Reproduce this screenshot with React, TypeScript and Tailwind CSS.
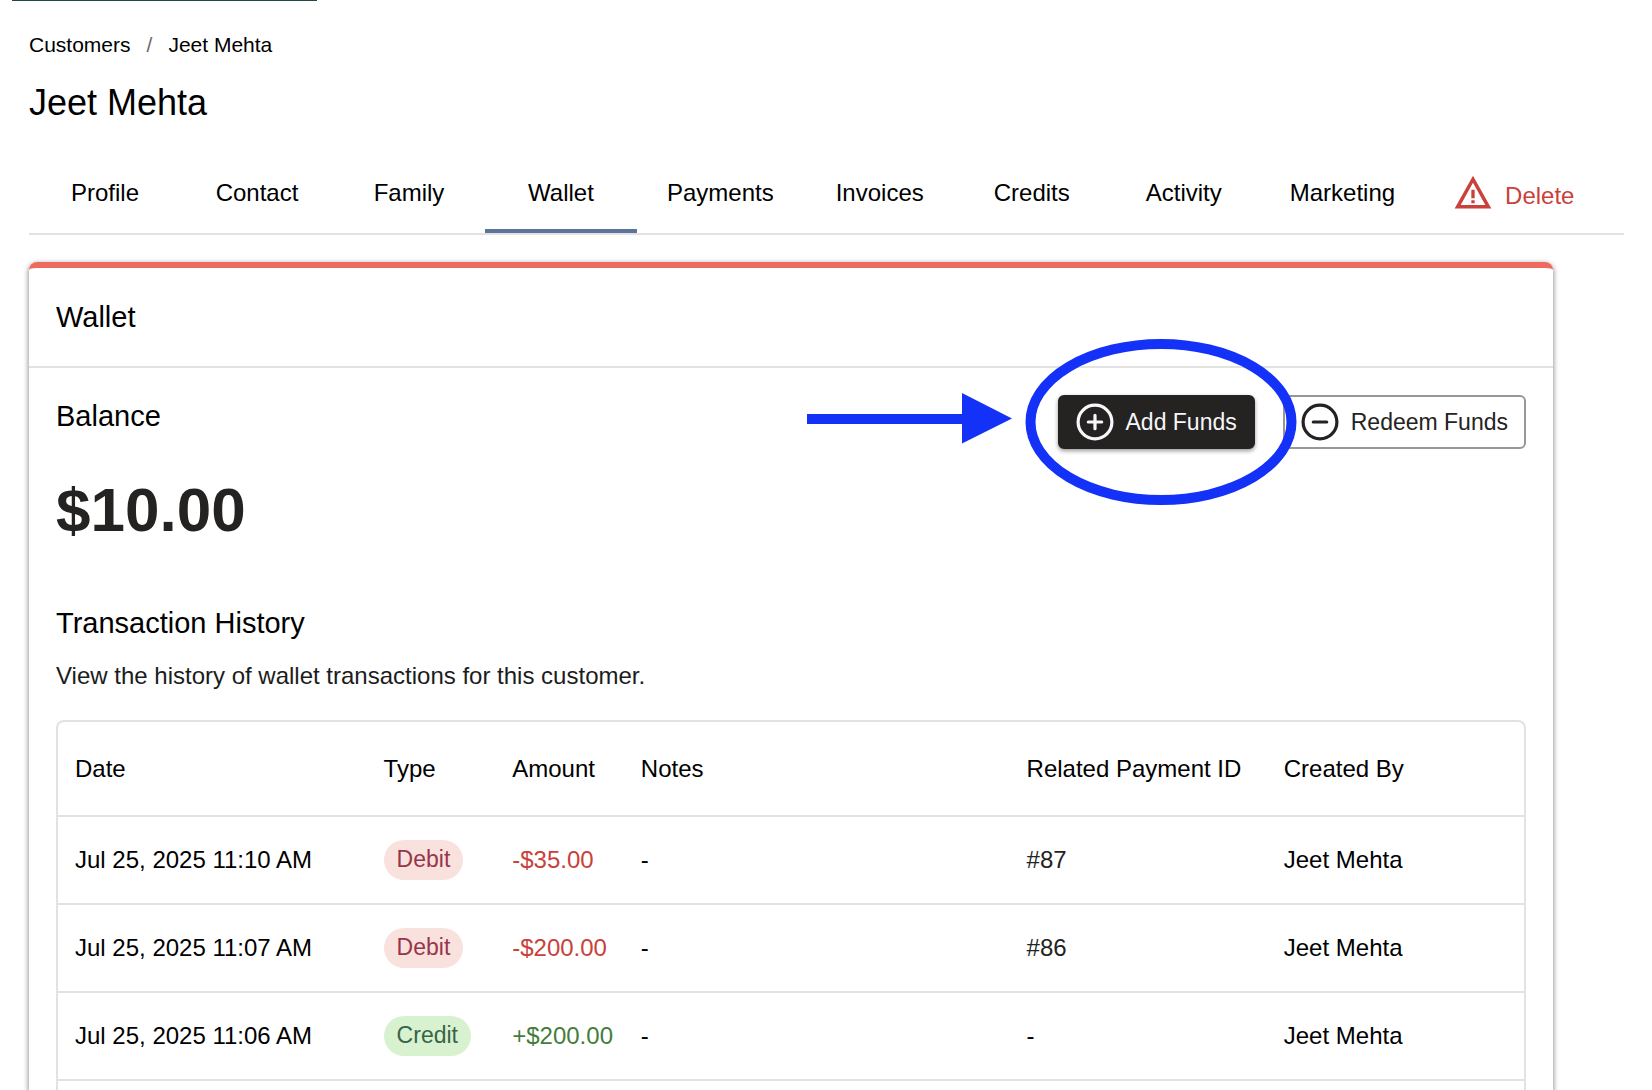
import clsx from 'clsx'
import { useState } from 'react'
import type { ReactNode } from 'react'

type Transaction = {
  date: string
  type: 'Debit' | 'Credit'
  amount: string
  notes: string
  paymentId: string | null
  createdBy: string
}

const TABS = ['Profile', 'Contact', 'Family', 'Wallet', 'Payments', 'Invoices', 'Credits', 'Activity', 'Marketing']

// Relative widths, the fixed table layout scales them up to the full row
const COLUMNS = [
  { label: 'Date', width: 'w-[12%]' },
  { label: 'Type', width: 'w-[5%]' },
  { label: 'Amount', width: 'w-[5%]' },
  { label: 'Notes', width: 'w-[15%]' },
  { label: 'Related Payment ID', width: 'w-[10%]' },
  { label: 'Created By', width: 'w-[10%]' },
]

const TRANSACTIONS: Transaction[] = [
  { date: 'Jul 25, 2025 11:10 AM', type: 'Debit', amount: '-$35.00', notes: '-', paymentId: '#87', createdBy: 'Jeet Mehta' },
  { date: 'Jul 25, 2025 11:07 AM', type: 'Debit', amount: '-$200.00', notes: '-', paymentId: '#86', createdBy: 'Jeet Mehta' },
  { date: 'Jul 25, 2025 11:06 AM', type: 'Credit', amount: '+$200.00', notes: '-', paymentId: null, createdBy: 'Jeet Mehta' },
]

export default function App() {
  const [tab, setTab] = useState('Wallet')

  return (
    <div className="flex h-screen flex-col overflow-hidden bg-white font-['Liberation_Sans',Arial,sans-serif] text-black">
      <div className="ml-3 h-px w-[305px] shrink-0 bg-[#24474b]" />
      <div className="flex flex-1 flex-col pl-[29px] pr-7 pt-7">
        <nav aria-label="Breadcrumb" className="flex gap-4 text-[21px] leading-8">
          <a href="#customers">Customers</a>
          <span className="text-[#6b6b6b]">/</span>
          <a href="#customer">Jeet Mehta</a>
        </nav>
        <h1 className="mt-[18px] text-4xl leading-[48px]">Jeet Mehta</h1>
        <CustomerTabs active={tab} onSelect={setTab} />
        <WalletCard />
      </div>
    </div>
  )
}

function CustomerTabs({ active, onSelect }: { active: string; onSelect: (tab: string) => void }) {
  return (
    <div className="mt-[26px] flex border-b-2 border-[#e2e2e2] text-2xl">
      <div role="tablist" className="flex">
        {TABS.map((name) => (
          <button
            key={name}
            type="button"
            role="tab"
            aria-selected={name === active}
            onClick={() => onSelect(name)}
            className={clsx(
              'h-20 min-w-[152px] border-y-4 border-t-transparent px-[30px]',
              name === active ? 'border-b-[#5b739d]' : 'border-b-transparent',
            )}
          >
            {name}
          </button>
        ))}
      </div>
      <button type="button" className="ml-7 flex h-20 items-center gap-3 text-[#c9413a]">
        <WarningIcon />
        <span className="pt-1.5">Delete</span>
      </button>
    </div>
  )
}

function WalletCard() {
  return (
    <section className="mr-[71px] mt-[27px] flex flex-1 flex-col rounded-t-lg border-t-[6px] border-[#ec6a5e] shadow-[0_2px_5px_1px_rgba(0,0,0,0.4)]">
      <header className="border-b-2 border-[#e2e2e2] px-[27px] py-7">
        <h2 className="text-[29px] leading-[42px]">Wallet</h2>
      </header>
      <div className="flex flex-1 flex-col px-[27px] pt-[27px]">
        <div className="flex items-start justify-between">
          <div>
            <h3 className="text-[29px] leading-[42px]">Balance</h3>
            <p className="mt-7 text-[62px] font-bold leading-[90px] text-[#242321]">$10.00</p>
          </div>
          <div className="flex gap-7">
            <div className="relative">
              <FundsButton filled icon={<CircleIcon plus />}>Add Funds</FundsButton>
              <Callout />
            </div>
            <FundsButton icon={<CircleIcon />}>Redeem Funds</FundsButton>
          </div>
        </div>
        <h3 className="mt-[47px] text-[29px] leading-[42px]">Transaction History</h3>
        <p className="mt-3.5 text-2xl leading-9 text-[#1c1c1c]">View the history of wallet transactions for this customer.</p>
        <TransactionTable rows={TRANSACTIONS} />
      </div>
    </section>
  )
}

function FundsButton({ filled, icon, children }: { filled?: boolean; icon: ReactNode; children: ReactNode }) {
  return (
    <button
      type="button"
      className={clsx(
        'flex h-[54px] items-center gap-3 whitespace-nowrap rounded-md border-2 px-4 text-[23px]',
        filled ? 'border-[#242321] bg-[#242321] text-[#f7f7fb] shadow-[0_2px_4px_rgba(0,0,0,0.4)]' : 'border-[#979797] bg-white text-[#242321]',
      )}
    >
      {icon}
      {children}
    </button>
  )
}

function TransactionTable({ rows }: { rows: Transaction[] }) {
  return (
    <div className="mt-[26px] flex-1 rounded-t-lg border-2 border-b-0 border-[#e2e2e2]">
      <table className="w-full table-fixed text-left text-2xl">
        <thead>
          <tr className="h-[94px] border-b-2 border-[#e2e2e2]">
            {COLUMNS.map((column) => (
              <th key={column.label} scope="col" className={clsx('whitespace-nowrap pl-[17px] font-normal', column.width)}>{column.label}</th>
            ))}
          </tr>
        </thead>
        <tbody>
          {rows.map((row) => (
            <tr key={row.date} className="h-[88px] whitespace-nowrap border-b-2 border-[#e2e2e2]">
              <td className="pl-[17px]">{row.date}</td>
              <td className="pl-[17px]"><TypeChip type={row.type} /></td>
              <td className={clsx('pl-[17px]', row.type === 'Debit' ? 'text-[#c9413a]' : 'text-[#457c3b]')}>{row.amount}</td>
              <td className="pl-[17px]">{row.notes}</td>
              <td className="pl-[17px]">{row.paymentId ? <a href="#payment" className="text-[#242321]">{row.paymentId}</a> : '-'}</td>
              <td className="pl-[17px]">{row.createdBy}</td>
            </tr>
          ))}
        </tbody>
      </table>
    </div>
  )
}

function TypeChip({ type }: { type: Transaction['type'] }) {
  return (
    <span
      className={clsx(
        'flex h-10 w-fit items-center rounded-full px-[13px] pb-0.5 text-[23px]',
        type === 'Debit' ? 'bg-[#f9e2dd] text-[#983549]' : 'bg-[#d8f2cf] text-[#37644a]',
      )}
    >
      {type}
    </span>
  )
}

// Arrow and ring that point at the Add Funds button
function Callout() {
  return (
    <svg className="pointer-events-none absolute -right-[42px] -top-14 z-10 max-w-none" width="490" height="166" viewBox="0 0 490 166" fill="none" aria-hidden="true">
      <path d="M0 75h155V54l50 25.500-50 25V85H0z" fill="#1431f8" />
      <ellipse cx="354" cy="83" rx="130.500" ry="78" stroke="#1431f8" strokeWidth="10" />
    </svg>
  )
}

function CircleIcon({ plus }: { plus?: boolean }) {
  return (
    <svg width="38" height="38" viewBox="0 0 38 38" fill="none" stroke="currentColor" strokeWidth="3.200" strokeLinecap="round" aria-hidden="true">
      <circle cx="19" cy="19" r="16.900" />
      <path d={plus ? 'M12.300 19h13.400M19 12.300v13.400' : 'M12.300 19h13.400'} />
    </svg>
  )
}

function WarningIcon() {
  return (
    <svg width="40" height="40" viewBox="0 0 24 24" fill="currentColor" aria-hidden="true">
      <path d="M12 5.800 19.400 19.200H4.600L12 5.800M12 1.700 1 21.300h22L12 1.700zm1 14.600h-2v1.800h2v-1.800zm0-6.300h-2v5.200h2V10z" />
    </svg>
  )
}
